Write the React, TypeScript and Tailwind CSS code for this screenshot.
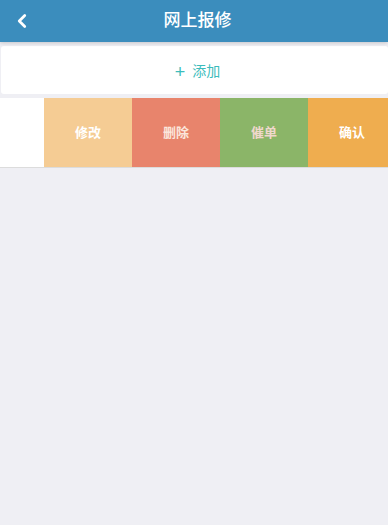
import { ChevronLeft } from "lucide-react";

const actions = [
  { label: "修改", bg: "bg-[#f5cc94]", fg: "text-white" },
  { label: "删除", bg: "bg-[#e8846c]", fg: "text-[#fbe6dc]" },
  { label: "催单", bg: "bg-[#8bb568]", fg: "text-[#f0d8cc]" },
  { label: "确认", bg: "bg-[#efad4f]", fg: "text-white" },
];

export default function App() {
  return (
    <div
      className="flex h-[525px] w-[388px] flex-col overflow-hidden bg-[#efeff4]"
      style={{ fontFamily: '"Liberation Sans", "Noto Sans CJK SC", sans-serif' }}
    >
      <header className="relative flex h-[42px] shrink-0 items-center justify-center bg-[#3b8dbd] pl-[7px] shadow-[0_1px_4px_rgba(0,0,0,0.18)]">
        <ChevronLeft className="absolute left-[11px] top-[10px] h-[22px] w-[22px] text-white" strokeWidth={3} />
        <h1 className="text-[17px] font-medium text-white">网上报修</h1>
      </header>

      <div className="mt-[4px] ml-[1px] flex h-[48px] items-center justify-center rounded-[3px] bg-white pl-[6px] pt-[3px] text-[14px] text-[#3cbcbc]">
        <span className="mr-[7px] text-[18px] leading-none">+</span>
        <span>添加</span>
      </div>

      <div className="mt-[4px] flex h-[70px] border-b border-[#dcdcdc] bg-white">
        <div className="w-[44px] shrink-0" />
        {actions.map((a) => (
          <div
            key={a.label}
            className={`flex w-[88px] shrink-0 items-center justify-center text-[13px] font-bold ${a.bg} ${a.fg}`}
          >
            {a.label}
          </div>
        ))}
      </div>
    </div>
  );
}
